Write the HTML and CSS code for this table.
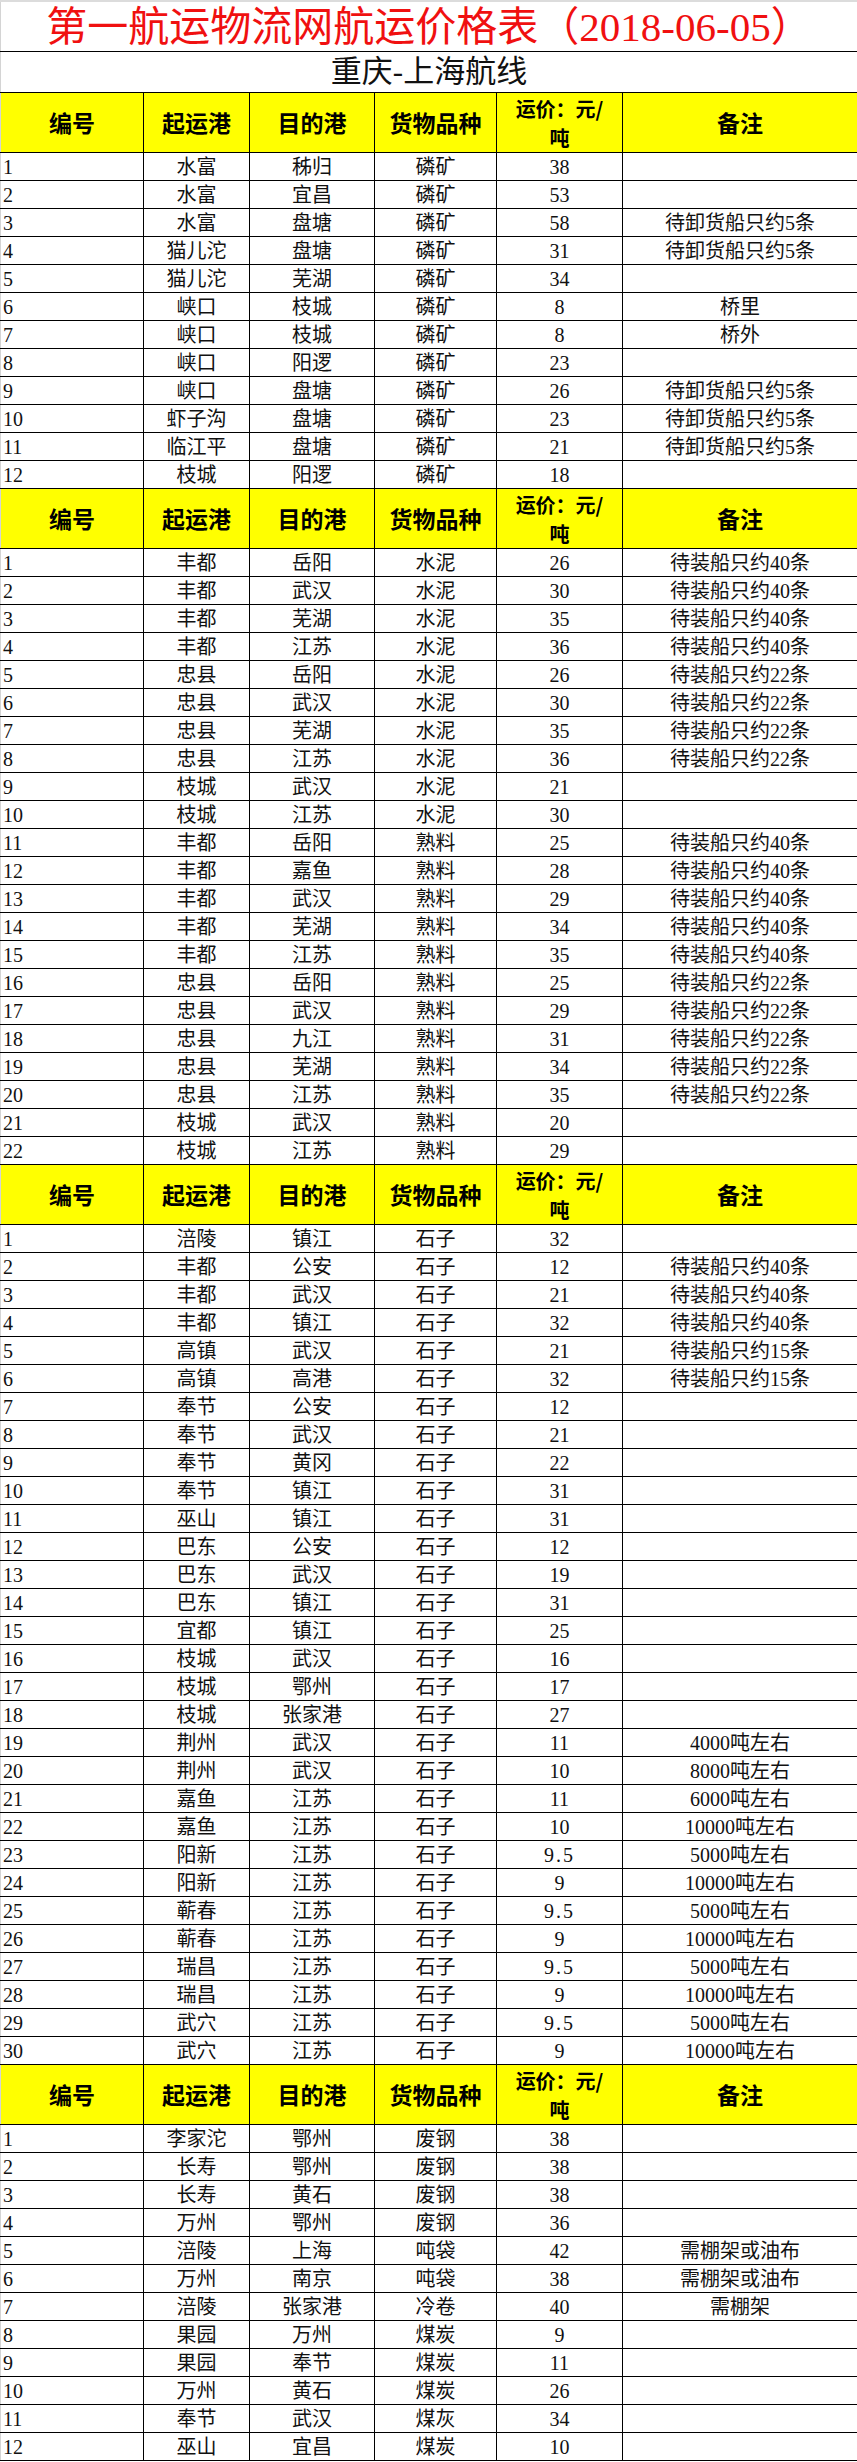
FILE: index.html
```html
<!DOCTYPE html>
<html lang="zh-CN">
<head>
<meta charset="utf-8">
<title>第一航运物流网航运价格表</title>
<link rel="stylesheet" href="styles.css">
</head>
<body>
<div class="sheet">
<table class="rates">
<colgroup>
<col class="c-no"><col class="c-from"><col class="c-to"><col class="c-cargo"><col class="c-price"><col class="c-note">
</colgroup>
<tbody>
<tr class="title-row"><td colspan="6">第一航运物流网航运价格表（2018-06-05）</td></tr>
<tr class="route-row"><td colspan="6">重庆-上海航线</td></tr>

<tr class="head"><th>编号</th><th>起运港</th><th>目的港</th><th>货物品种</th><th class="price-h">运价：元/<br>吨</th><th>备注</th></tr>
<tr><td>1</td><td>水富</td><td>秭归</td><td>磷矿</td><td>38</td><td></td></tr>
<tr><td>2</td><td>水富</td><td>宜昌</td><td>磷矿</td><td>53</td><td></td></tr>
<tr><td>3</td><td>水富</td><td>盘塘</td><td>磷矿</td><td>58</td><td>待卸货船只约5条</td></tr>
<tr><td>4</td><td>猫儿沱</td><td>盘塘</td><td>磷矿</td><td>31</td><td>待卸货船只约5条</td></tr>
<tr><td>5</td><td>猫儿沱</td><td>芜湖</td><td>磷矿</td><td>34</td><td></td></tr>
<tr><td>6</td><td>峡口</td><td>枝城</td><td>磷矿</td><td>8</td><td>桥里</td></tr>
<tr><td>7</td><td>峡口</td><td>枝城</td><td>磷矿</td><td>8</td><td>桥外</td></tr>
<tr><td>8</td><td>峡口</td><td>阳逻</td><td>磷矿</td><td>23</td><td></td></tr>
<tr><td>9</td><td>峡口</td><td>盘塘</td><td>磷矿</td><td>26</td><td>待卸货船只约5条</td></tr>
<tr><td>10</td><td>虾子沟</td><td>盘塘</td><td>磷矿</td><td>23</td><td>待卸货船只约5条</td></tr>
<tr><td>11</td><td>临江平</td><td>盘塘</td><td>磷矿</td><td>21</td><td>待卸货船只约5条</td></tr>
<tr><td>12</td><td>枝城</td><td>阳逻</td><td>磷矿</td><td>18</td><td></td></tr>

<tr class="head"><th>编号</th><th>起运港</th><th>目的港</th><th>货物品种</th><th class="price-h">运价：元/<br>吨</th><th>备注</th></tr>
<tr><td>1</td><td>丰都</td><td>岳阳</td><td>水泥</td><td>26</td><td>待装船只约40条</td></tr>
<tr><td>2</td><td>丰都</td><td>武汉</td><td>水泥</td><td>30</td><td>待装船只约40条</td></tr>
<tr><td>3</td><td>丰都</td><td>芜湖</td><td>水泥</td><td>35</td><td>待装船只约40条</td></tr>
<tr><td>4</td><td>丰都</td><td>江苏</td><td>水泥</td><td>36</td><td>待装船只约40条</td></tr>
<tr><td>5</td><td>忠县</td><td>岳阳</td><td>水泥</td><td>26</td><td>待装船只约22条</td></tr>
<tr><td>6</td><td>忠县</td><td>武汉</td><td>水泥</td><td>30</td><td>待装船只约22条</td></tr>
<tr><td>7</td><td>忠县</td><td>芜湖</td><td>水泥</td><td>35</td><td>待装船只约22条</td></tr>
<tr><td>8</td><td>忠县</td><td>江苏</td><td>水泥</td><td>36</td><td>待装船只约22条</td></tr>
<tr><td>9</td><td>枝城</td><td>武汉</td><td>水泥</td><td>21</td><td></td></tr>
<tr><td>10</td><td>枝城</td><td>江苏</td><td>水泥</td><td>30</td><td></td></tr>
<tr><td>11</td><td>丰都</td><td>岳阳</td><td>熟料</td><td>25</td><td>待装船只约40条</td></tr>
<tr><td>12</td><td>丰都</td><td>嘉鱼</td><td>熟料</td><td>28</td><td>待装船只约40条</td></tr>
<tr><td>13</td><td>丰都</td><td>武汉</td><td>熟料</td><td>29</td><td>待装船只约40条</td></tr>
<tr><td>14</td><td>丰都</td><td>芜湖</td><td>熟料</td><td>34</td><td>待装船只约40条</td></tr>
<tr><td>15</td><td>丰都</td><td>江苏</td><td>熟料</td><td>35</td><td>待装船只约40条</td></tr>
<tr><td>16</td><td>忠县</td><td>岳阳</td><td>熟料</td><td>25</td><td>待装船只约22条</td></tr>
<tr><td>17</td><td>忠县</td><td>武汉</td><td>熟料</td><td>29</td><td>待装船只约22条</td></tr>
<tr><td>18</td><td>忠县</td><td>九江</td><td>熟料</td><td>31</td><td>待装船只约22条</td></tr>
<tr><td>19</td><td>忠县</td><td>芜湖</td><td>熟料</td><td>34</td><td>待装船只约22条</td></tr>
<tr><td>20</td><td>忠县</td><td>江苏</td><td>熟料</td><td>35</td><td>待装船只约22条</td></tr>
<tr><td>21</td><td>枝城</td><td>武汉</td><td>熟料</td><td>20</td><td></td></tr>
<tr><td>22</td><td>枝城</td><td>江苏</td><td>熟料</td><td>29</td><td></td></tr>

<tr class="head"><th>编号</th><th>起运港</th><th>目的港</th><th>货物品种</th><th class="price-h">运价：元/<br>吨</th><th>备注</th></tr>
<tr><td>1</td><td>涪陵</td><td>镇江</td><td>石子</td><td>32</td><td></td></tr>
<tr><td>2</td><td>丰都</td><td>公安</td><td>石子</td><td>12</td><td>待装船只约40条</td></tr>
<tr><td>3</td><td>丰都</td><td>武汉</td><td>石子</td><td>21</td><td>待装船只约40条</td></tr>
<tr><td>4</td><td>丰都</td><td>镇江</td><td>石子</td><td>32</td><td>待装船只约40条</td></tr>
<tr><td>5</td><td>高镇</td><td>武汉</td><td>石子</td><td>21</td><td>待装船只约15条</td></tr>
<tr><td>6</td><td>高镇</td><td>高港</td><td>石子</td><td>32</td><td>待装船只约15条</td></tr>
<tr><td>7</td><td>奉节</td><td>公安</td><td>石子</td><td>12</td><td></td></tr>
<tr><td>8</td><td>奉节</td><td>武汉</td><td>石子</td><td>21</td><td></td></tr>
<tr><td>9</td><td>奉节</td><td>黄冈</td><td>石子</td><td>22</td><td></td></tr>
<tr><td>10</td><td>奉节</td><td>镇江</td><td>石子</td><td>31</td><td></td></tr>
<tr><td>11</td><td>巫山</td><td>镇江</td><td>石子</td><td>31</td><td></td></tr>
<tr><td>12</td><td>巴东</td><td>公安</td><td>石子</td><td>12</td><td></td></tr>
<tr><td>13</td><td>巴东</td><td>武汉</td><td>石子</td><td>19</td><td></td></tr>
<tr><td>14</td><td>巴东</td><td>镇江</td><td>石子</td><td>31</td><td></td></tr>
<tr><td>15</td><td>宜都</td><td>镇江</td><td>石子</td><td>25</td><td></td></tr>
<tr><td>16</td><td>枝城</td><td>武汉</td><td>石子</td><td>16</td><td></td></tr>
<tr><td>17</td><td>枝城</td><td>鄂州</td><td>石子</td><td>17</td><td></td></tr>
<tr><td>18</td><td>枝城</td><td>张家港</td><td>石子</td><td>27</td><td></td></tr>
<tr><td>19</td><td>荆州</td><td>武汉</td><td>石子</td><td>11</td><td>4000吨左右</td></tr>
<tr><td>20</td><td>荆州</td><td>武汉</td><td>石子</td><td>10</td><td>8000吨左右</td></tr>
<tr><td>21</td><td>嘉鱼</td><td>江苏</td><td>石子</td><td>11</td><td>6000吨左右</td></tr>
<tr><td>22</td><td>嘉鱼</td><td>江苏</td><td>石子</td><td>10</td><td>10000吨左右</td></tr>
<tr><td>23</td><td>阳新</td><td>江苏</td><td>石子</td><td class="dec">9.5</td><td>5000吨左右</td></tr>
<tr><td>24</td><td>阳新</td><td>江苏</td><td>石子</td><td>9</td><td>10000吨左右</td></tr>
<tr><td>25</td><td>蕲春</td><td>江苏</td><td>石子</td><td class="dec">9.5</td><td>5000吨左右</td></tr>
<tr><td>26</td><td>蕲春</td><td>江苏</td><td>石子</td><td>9</td><td>10000吨左右</td></tr>
<tr><td>27</td><td>瑞昌</td><td>江苏</td><td>石子</td><td class="dec">9.5</td><td>5000吨左右</td></tr>
<tr><td>28</td><td>瑞昌</td><td>江苏</td><td>石子</td><td>9</td><td>10000吨左右</td></tr>
<tr><td>29</td><td>武穴</td><td>江苏</td><td>石子</td><td class="dec">9.5</td><td>5000吨左右</td></tr>
<tr><td>30</td><td>武穴</td><td>江苏</td><td>石子</td><td>9</td><td>10000吨左右</td></tr>

<tr class="head"><th>编号</th><th>起运港</th><th>目的港</th><th>货物品种</th><th class="price-h">运价：元/<br>吨</th><th>备注</th></tr>
<tr><td>1</td><td>李家沱</td><td>鄂州</td><td>废钢</td><td>38</td><td></td></tr>
<tr><td>2</td><td>长寿</td><td>鄂州</td><td>废钢</td><td>38</td><td></td></tr>
<tr><td>3</td><td>长寿</td><td>黄石</td><td>废钢</td><td>38</td><td></td></tr>
<tr><td>4</td><td>万州</td><td>鄂州</td><td>废钢</td><td>36</td><td></td></tr>
<tr><td>5</td><td>涪陵</td><td>上海</td><td>吨袋</td><td>42</td><td>需棚架或油布</td></tr>
<tr><td>6</td><td>万州</td><td>南京</td><td>吨袋</td><td>38</td><td>需棚架或油布</td></tr>
<tr><td>7</td><td>涪陵</td><td>张家港</td><td>冷卷</td><td>40</td><td>需棚架</td></tr>
<tr><td>8</td><td>果园</td><td>万州</td><td>煤炭</td><td>9</td><td></td></tr>
<tr><td>9</td><td>果园</td><td>奉节</td><td>煤炭</td><td>11</td><td></td></tr>
<tr><td>10</td><td>万州</td><td>黄石</td><td>煤炭</td><td>26</td><td></td></tr>
<tr><td>11</td><td>奉节</td><td>武汉</td><td>煤灰</td><td>34</td><td></td></tr>
<tr><td>12</td><td>巫山</td><td>宜昌</td><td>煤炭</td><td>10</td><td></td></tr>
</tbody>
</table>
</div>
</body>
</html>
```

FILE: styles.css
```css
html, body {
  margin: 0;
  padding: 0;
  background: #ffffff;
}

.sheet {
  width: 857px;
  border-top: 2px solid #dcdcdc;
  box-sizing: border-box;
}

.rates {
  width: 857px;
  table-layout: fixed;
  border-collapse: collapse;
  font-family: "Liberation Serif", "Noto Sans CJK SC", serif;
  color: #111;
}

.c-no { width: 143px; }
.c-from { width: 106px; }
.c-to { width: 125px; }
.c-cargo { width: 122px; }
.c-price { width: 126px; }
.c-note { width: 235px; }

.rates td,
.rates th {
  border: 1px solid #000;
  padding: 0;
  text-align: center;
  vertical-align: middle;
  white-space: nowrap;
}

.rates tr > :first-child {
  border-left: 1px solid #d4d4d4;
}

.rates td {
  height: 27px;
  font-size: 20px;
  line-height: 26px;
  overflow: hidden;
}

.rates tr > td:first-child {
  text-align: left;
  padding-left: 2px;
}

.rates td.dec {
  letter-spacing: 2px;
}

.title-row td {
  height: 49px;
  border-top: none;
  font-size: 41px;
  line-height: 48px;
  color: #f01010;
  font-family: "Liberation Serif", "Noto Sans CJK SC", serif;
}

.rates tr.title-row > td:first-child,
.rates tr.route-row > td:first-child {
  text-align: center;
  padding-left: 0;
}

.route-row td {
  height: 40px;
  font-size: 31px;
  line-height: 40px;
  color: #111;
}

.head th {
  height: 59px;
  background: #ffff00;
  font-family: "Noto Sans CJK SC", sans-serif;
  font-weight: 700;
  font-size: 23px;
  line-height: 29px;
  color: #000;
}

.head th.price-h {
  font-size: 20px;
  line-height: 29px;
}
```
